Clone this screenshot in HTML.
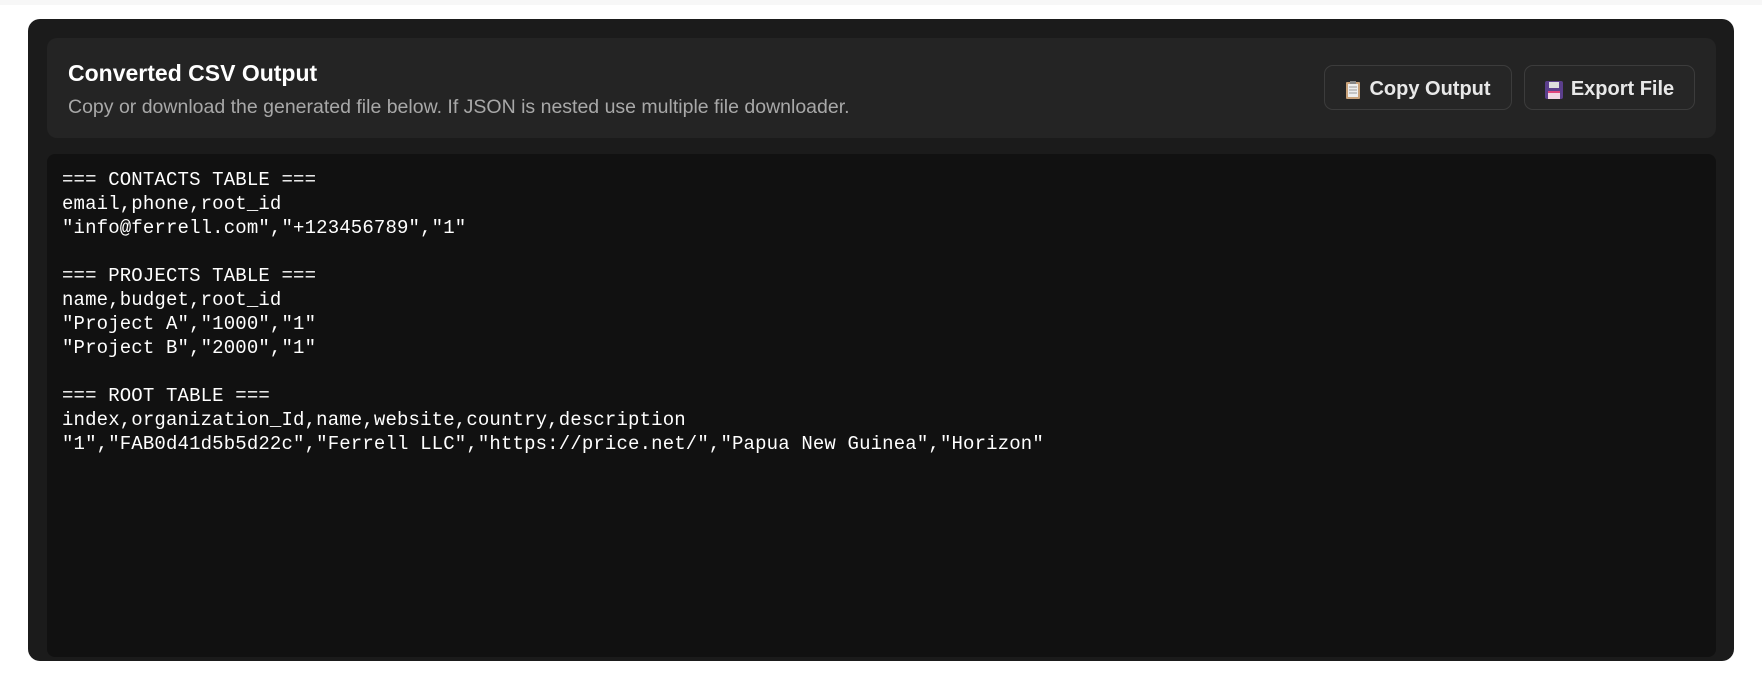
<!DOCTYPE html>
<html><head><style>
html,body{margin:0;padding:0;width:1762px;height:694px;background:#fff;overflow:hidden;font-family:"Liberation Sans",sans-serif}
.top{position:absolute;left:0;top:0;width:1762px;height:5px;background:#f7f7f7}
.outer{position:absolute;left:28px;top:19px;width:1706px;height:642px;background:#1b1b1b;border-radius:12px}
.head{position:absolute;left:47px;top:38px;width:1669px;height:100px;background:#242424;border-radius:10px}
.title{position:absolute;left:68px;top:60px;font-size:23px;font-weight:bold;color:#fff}
.sub{position:absolute;left:68px;top:96px;font-size:19.5px;color:#a8a8a8}
.btn{position:absolute;top:65px;height:45px;padding-top:4px;border:1px solid #3c3c3c;border-radius:9px;background:#262626;color:#e8e8e8;font-weight:bold;font-size:20px;box-sizing:border-box;display:flex;align-items:center;justify-content:center;gap:8px}
.code{position:absolute;left:47px;top:154px;width:1669px;height:503px;background:#111;border-radius:8px}
pre{position:absolute;left:62px;top:168px;margin:0;font-family:"Liberation Mono",monospace;font-size:19px;letter-spacing:0.15px;line-height:24px;color:#fff}
</style></head><body>
<div class="top"></div>
<div class="outer"></div>
<div class="head"></div>
<div class="title">Converted CSV Output</div>
<div class="sub">Copy or download the generated file below. If JSON is nested use multiple file downloader.</div>
<div class="btn" style="left:1324px;width:188px"><svg width="16" height="20" viewBox="0 0 16 20"><rect x="1" y="2" width="14" height="17" rx="1" fill="#c9a27a"/><rect x="3" y="4" width="10" height="13" fill="#eee"/><rect x="5" y="1" width="6" height="3" fill="#888"/><path d="M4 7h8M4 10h8M4 13h8" stroke="#999" stroke-width="1"/></svg>Copy Output</div>
<div class="btn" style="left:1524px;width:171px"><svg width="18" height="18" viewBox="0 0 18 18"><rect x="0" y="0" width="18" height="18" rx="2" fill="#5b3f8c"/><rect x="4" y="1" width="10" height="6" fill="#ddd"/><rect x="3" y="10" width="12" height="8" fill="#f1d6e4"/><rect x="3" y="10" width="12" height="2" fill="#e0457b"/></svg>Export File</div>
<div class="code"></div>
<pre>=== CONTACTS TABLE ===
email,phone,root_id
"info@ferrell.com","+123456789","1"

=== PROJECTS TABLE ===
name,budget,root_id
"Project A","1000","1"
"Project B","2000","1"

=== ROOT TABLE ===
index,organization_Id,name,website,country,description
"1","FAB0d41d5b5d22c","Ferrell LLC","https://price.net/","Papua New Guinea","Horizon"</pre>
</body></html>
